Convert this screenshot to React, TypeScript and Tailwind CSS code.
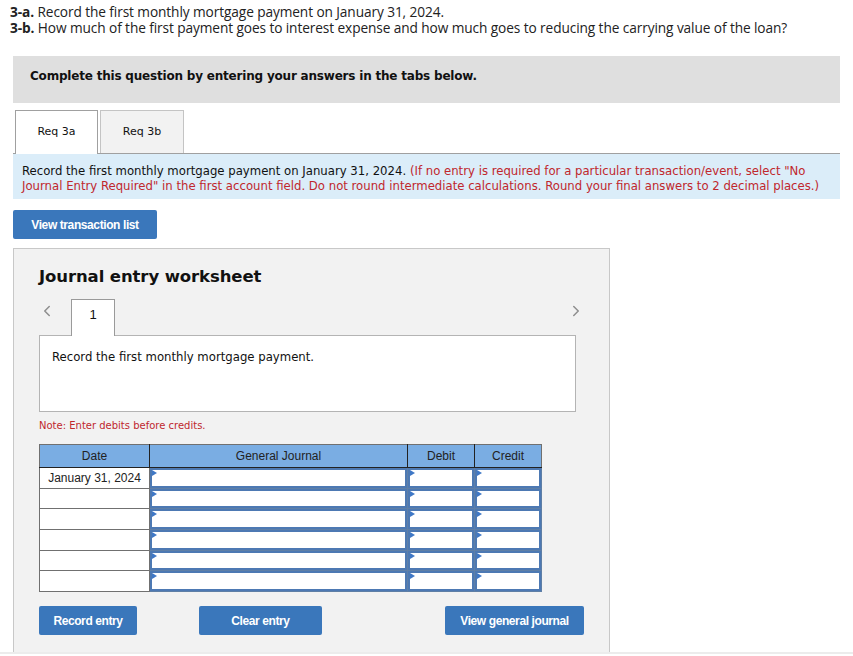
import { ChevronLeft, ChevronRight } from 'lucide-react'

const rows = ['January 31, 2024', '', '', '', '', '']

const narrow = { fontFamily: '"DejaVu Sans Condensed", "Open Sans", sans-serif' }

function InputCell() {
  return (
    <div className="relative h-full border-2 border-[#4d79b3] bg-white">
      <span className="absolute left-0 top-0 h-0 w-0 border-y-[3px] border-l-[5px] border-y-transparent border-l-[#3f78c6]" />
    </div>
  )
}

function BlueButton({ label, className }: { label: string; className: string }) {
  return (
    <button
      className={`h-[29px] rounded-[2px] bg-[#3a77bb] text-[12px] font-bold tracking-[-0.4px] text-white ${className}`}
      style={{ fontFamily: '"Liberation Sans Narrow", "Liberation Sans", Arial, sans-serif' }}
    >
      {label}
    </button>
  )
}

export default function App() {
  return (
    <div className="relative h-[656px] w-[853px] overflow-hidden bg-white text-[#111]">
      <div className="pl-[10px] pt-[4px] text-[13.7px] leading-[16px] tracking-[-0.1px] text-[#222]" style={{ fontFamily: '"Open Sans", Lato, sans-serif' }}>
        <p><b>3-a.</b> Record the first monthly mortgage payment on January 31, 2024.</p>
        <p><b>3-b.</b> How much of the first payment goes to interest expense and how much goes to reducing the carrying value of the loan?</p>
      </div>

      <div className="mx-[13px] mt-[20px]" style={{ fontFamily: '"DejaVu Sans", Verdana, sans-serif' }}>
        <div className="h-[47px] bg-[#dfdfdf] pl-[17px] pt-[11px] text-[12px] font-bold tracking-[-0.2px]">
          Complete this question by entering your answers in the tabs below.
        </div>

        <div className="mt-[7px] flex pl-[2px] text-[11px]">
          <div className="relative z-10 -mb-px flex h-[44px] w-[83px] items-center justify-center border border-b-0 border-[#a0a0a0] bg-white">Req 3a</div>
          <div className="ml-[2px] flex h-[43px] w-[84px] items-center justify-center border border-b-0 border-[#c4c4c4] bg-[#f2f2f2]">Req 3b</div>
        </div>
      </div>

      <div
        className="mx-[13px] h-[46px] border-t border-[#a0a0a0] bg-[#dbedf9] pl-[9px] pt-[9px] text-[13px] leading-[15px]"
        style={narrow}
      >
        Record the first monthly mortgage payment on January 31, 2024.{' '}
        <span className="text-[#c0272d]">
          (If no entry is required for a particular transaction/event, select "No Journal Entry Required" in the first account field. Do not round intermediate calculations. Round your final answers to 2 decimal places.)
        </span>
      </div>

      <div className="ml-[13px] mt-[11px]">
        <BlueButton label="View transaction list" className="w-[144px]" />
      </div>

      <div className="ml-[13px] mt-[9px] h-[404px] w-[597px] border border-b-0 border-[#c8c8c8] bg-[#f2f2f2] pl-[25px] pt-[17px]">
        <h2 className="text-[16.5px] font-bold leading-[22px] tracking-[-0.1px]" style={{ fontFamily: '"DejaVu Sans", Verdana, sans-serif' }}>
          Journal entry worksheet
        </h2>

        <div className="mt-[11px] flex h-[37px] w-[546px] items-start" style={{ fontFamily: '"Liberation Sans", Arial, sans-serif' }}>
          <ChevronLeft size={18} strokeWidth={2} className="-ml-[1px] mt-[3px] text-[#8e8e8e]" />
          <div className="relative z-10 ml-[15px] flex h-[37px] w-[44px] items-start justify-center border border-b-0 border-[#9a9a9a] bg-white pt-[5px] text-[13px]">1</div>
          <ChevronRight size={18} strokeWidth={2} className="ml-auto mt-[3px] text-[#8e8e8e]" />
        </div>

        <div className="-mt-px h-[77px] w-[537px] border border-[#b4b4b4] bg-white pl-[12px] pt-[11px] text-[13px]" style={narrow}>
          Record the first monthly mortgage payment.
        </div>

        <p className="mt-[8px] text-[10px] leading-[12px] text-[#c0272d]" style={{ fontFamily: '"DejaVu Sans", Verdana, sans-serif' }}>
          Note: Enter debits before credits.
        </p>

        <table className="mt-[12px] border-collapse text-[12px]" style={{ fontFamily: '"Liberation Sans", Arial, sans-serif' }}>
          <thead>
            <tr className="h-[23px] bg-[#7aade3] text-[#222]">
              <th className="w-[110px] border border-[#707070] border-b-[#222] border-r-[#222] font-normal">Date</th>
              <th className="w-[258px] border border-[#707070] border-b-[#222] border-r-[#222] font-normal">General Journal</th>
              <th className="w-[67px] border border-[#707070] border-b-[#222] border-r-[#222] font-normal">Debit</th>
              <th className="w-[67px] border border-[#707070] border-b-[#222] font-normal">Credit</th>
            </tr>
          </thead>
          <tbody>
            {rows.map((d, i) => (
              <tr key={i} className="h-[20.7px]">
                <td className="border border-[#707070] bg-white text-center text-[#222]">{d}</td>
                <td className="h-[20.7px] border border-[#5f7fa6] p-0"><InputCell /></td>
                <td className="h-[20.7px] border border-[#5f7fa6] p-0"><InputCell /></td>
                <td className="h-[20.7px] border border-[#5f7fa6] p-0"><InputCell /></td>
              </tr>
            ))}
          </tbody>
        </table>

        <div className="mt-[14px] flex w-[545px]">
          <BlueButton label="Record entry" className="w-[98px]" />
          <BlueButton label="Clear entry" className="ml-[62px] w-[123px]" />
          <BlueButton label="View general journal" className="ml-auto w-[139px]" />
        </div>
      </div>
      <div className="h-[3px] border-t-2 border-[#ececec]" />
    </div>
  )
}
